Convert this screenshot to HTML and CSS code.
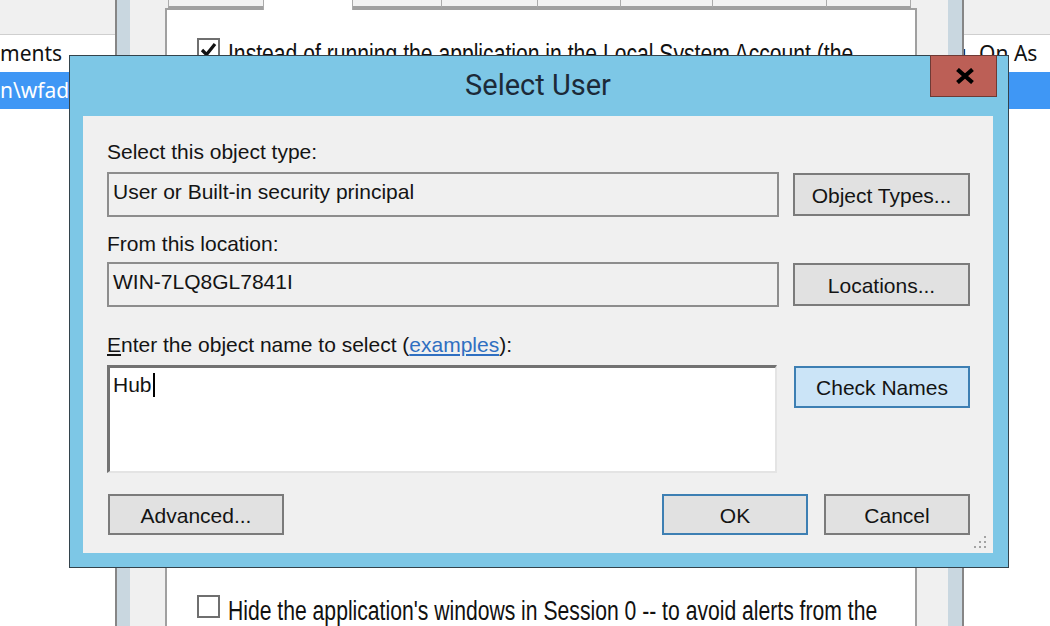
FILE: index.html
```html
<!DOCTYPE html>
<html lang="en">
<head>
<meta charset="utf-8">
<title>Select User</title>
<link rel="stylesheet" href="styles.css">
</head>
<body>
<div class="desk">
  <div class="list list-left">
    <div class="list-head"></div>
    <div class="list-row">ments</div>
    <div class="list-row selected">n\wfadmin</div>
  </div>
  <div class="frame-edge edge-left"></div>
  <div class="sheet">
    <div class="tabs">
      <div class="tab">General</div>
      <div class="tab active">Logon</div>
      <div class="tab">Restart</div>
      <div class="tab">Monitor</div>
      <div class="tab">Startup</div>
      <div class="tab">Automate</div>
      <div class="tab">Dependencies</div>
      <div class="tab">Extras</div>
    </div>
    <div class="page">
      <div class="opt">
        <span class="check on">
          <svg viewBox="0 0 19 19" width="19" height="19"><polyline points="3,10 7.5,14.5 16,4" fill="none" stroke="#111" stroke-width="3.2"/></svg>
        </span>
        <span class="opt-text">Instead of running the application in the Local System Account (the<br>default), run it under a specific user account</span>
      </div>
      <div class="opt opt-hide">
        <span class="check"></span>
        <span class="opt-text">Hide the application's windows in Session 0 -- to avoid alerts from the<br>Interactive Services Detection service.</span>
      </div>
    </div>
  </div>
  <div class="frame-edge edge-right"></div>
  <div class="list list-right">
    <div class="list-head"></div>
    <div class="list-row"><span class="col-shift">Log</span> On As</div>
    <div class="list-row selected"></div>
  </div>
</div>

<div class="dialog">
  <div class="titlebar">Select User</div>
  <div class="close">
    <svg viewBox="0 0 20 16" width="20" height="16"><path d="M2.5 1.5 L17.5 14.5 M17.5 1.5 L2.5 14.5" stroke="#000" stroke-width="4.2" fill="none"/></svg>
  </div>
  <div class="client">
    <div class="lbl">Select this object type:</div>
    <div class="row">
      <div class="field">User or Built-in security principal</div>
      <button class="btn side">Object Types...</button>
    </div>
    <div class="lbl lbl-loc">From this location:</div>
    <div class="row">
      <div class="field">WIN-7LQ8GL7841I</div>
      <button class="btn side">Locations...</button>
    </div>
    <div class="lbl lbl-names"><u>E</u>nter the object name to select (<a class="link">examples</a>):</div>
    <div class="row row-names">
      <div class="names">Hub<span class="caret"></span></div>
      <button class="btn side hot">Check Names</button>
    </div>
    <div class="actions">
      <button class="btn adv">Advanced...</button>
      <button class="btn wide default">OK</button>
      <button class="btn wide">Cancel</button>
    </div>
    <svg class="grip" viewBox="0 0 16 16" width="16" height="16">
      <g fill="#a3a3a3">
        <rect x="12" y="2" width="2" height="2"/>
        <rect x="7" y="7" width="2" height="2"/><rect x="12" y="7" width="2" height="2"/>
        <rect x="2" y="12" width="2" height="2"/><rect x="7" y="12" width="2" height="2"/><rect x="12" y="12" width="2" height="2"/>
      </g>
    </svg>
  </div>
</div>
</body>
</html>
```

FILE: styles.css
```css
* { box-sizing: border-box; }

html, body { margin: 0; padding: 0; }

body {
  width: 1050px;
  height: 626px;
  overflow: hidden;
  position: relative;
  background: #fff;
  font-family: "Liberation Sans", Arial, sans-serif;
  color: #141414;
}

/* ---------- window behind the dialog ---------- */
.desk {
  display: flex;
  height: 626px;
}

.list {
  flex: none;
  background: #fff;
  overflow: hidden;
  font-family: "Noto Sans", "Liberation Sans", sans-serif;
  font-size: 21px;
  color: #111;
}

.list-left { width: 117px; border-right: 2px solid #868686; }
.list-right { width: 88px; border-left: 2px solid #868686; }

.list-head {
  height: 35px;
  background: #f0f0f0;
  border-bottom: 1px solid #cfcfcf;
}

.list-row {
  height: 37px;
  line-height: 37px;
  white-space: nowrap;
}

.list-row.selected { background: #3f97f5; color: #fff; }

.col-shift { margin-left: -34px; margin-right: 7px; }

.frame-edge { flex: none; background: #c9d7e0; }
.edge-left { width: 13px; }
.edge-right { width: 14px; }

.sheet {
  flex: none;
  width: 818px;
  overflow: hidden;
  background: #f0f0f0;
  padding: 0 31px 0 35px;
  display: flex;
  flex-direction: column;
}

.tabs {
  display: flex;
  height: 8px;
  margin-left: 3px;
  align-items: flex-end;
}

.tab {
  height: 30px;
  flex: none;
  background: #f2f2f2;
  border: 1px solid #ababab;
  border-bottom: 2px solid #a0a0a0;
  margin-left: -1px;
  font-size: 19px;
  line-height: 20px;
  text-align: center;
  color: #444;
  overflow: hidden;
}

.tab:nth-child(1) { width: 96px; margin-left: 0; }
.tab:nth-child(2) { width: 90px; }
.tab:nth-child(3) { width: 90px; }
.tab:nth-child(4) { width: 97px; }
.tab:nth-child(5) { width: 84px; }
.tab:nth-child(6) { width: 93px; }
.tab:nth-child(7) { width: 115px; }
.tab:nth-child(8) { width: 85px; }

.tab.active {
  background: #fff;
  border-bottom: none;
  height: 32px;
  margin-bottom: -2px;
  position: relative;
  z-index: 1;
}

.page {
  flex: 1;
  overflow: hidden;
  background: #fff;
  border: 2px solid #a0a0a0;
  border-bottom: none;
  padding: 28px 0 0 30px;
}

.opt {
  display: flex;
  gap: 8px;
  align-items: flex-start;
}

.opt-hide { margin-top: 499px; }

.check {
  width: 23px;
  height: 23px;
  flex: none;
  border: 2px solid #6f6f6f;
  background: #fff;
  display: flex;
  align-items: center;
  justify-content: center;
}

.opt-text {
  display: inline-block;
  white-space: nowrap;
  font-size: 27px;
  line-height: 28px;
  padding-top: 2px;
  color: #111;
  transform: scaleX(0.783);
  transform-origin: left top;
}

/* ---------- Select User dialog ---------- */
.dialog {
  position: absolute;
  left: 69px;
  top: 55px;
  width: 940px;
  height: 513px;
  background: #7dc7e6;
  border: 1px solid #33434c;
  padding: 0 15px 14px 13px;
  display: flex;
  flex-direction: column;
}

.titlebar {
  height: 60px;
  padding-top: 12px;
  line-height: 34px;
  text-align: center;
  font-family: Roboto, "Noto Sans", sans-serif;
  font-size: 29px;
  color: #1c2a38;
}

.close {
  position: absolute;
  top: -1px;
  right: 11px;
  width: 67px;
  height: 42px;
  background: #bc5f56;
  border: 1px solid #6e3a35;
  display: flex;
  align-items: center;
  justify-content: center;
  padding-left: 2px;
}

.client {
  flex: 1;
  position: relative;
  background: #f0f0f0;
  padding: 24px 23px 0 24px;
  font-size: 21px;
}

.lbl {
  line-height: 24px;
  margin-bottom: 8px;
  white-space: nowrap;
}

.lbl-loc { margin-top: 15px; margin-bottom: 6px; }
.lbl-names { margin-top: 26px; }

.link { color: #2f6fc1; text-decoration: underline; }

.row {
  display: flex;
  align-items: center;
  gap: 14px;
}

.field {
  width: 672px;
  height: 45px;
  border: 2px solid #8d8d8d;
  background: #f0f0f0;
  padding: 6px 0 0 4px;
  line-height: 24px;
  white-space: nowrap;
}

.btn {
  font-family: "Liberation Sans", Arial, sans-serif;
  font-size: 21px;
  line-height: 24px;
  color: #141414;
  background: #e1e1e1;
  border: 2px solid #7b7b7b;
  padding: 2px 0 0;
  margin: 0;
  text-align: center;
}

.btn.side { width: 177px; height: 43px; }

.row-names {
  align-items: flex-start;
  gap: 17px;
}

.names {
  width: 670px;
  height: 108px;
  background: #fff;
  border-style: solid;
  border-width: 3px 2px 2px 3px;
  border-color: #727272 #e4e4e4 #e4e4e4 #727272;
  padding: 5px 0 0 3px;
  line-height: 24px;
}

.caret {
  display: inline-block;
  width: 2px;
  height: 24px;
  background: #000;
  vertical-align: -5px;
  margin-left: 1px;
}

.btn.hot {
  width: 176px;
  height: 42px;
  margin-top: 1px;
  background: #cbe4f7;
  border-color: #3d7fb3;
}

.actions {
  display: flex;
  gap: 16px;
  margin-top: 21px;
}

.btn.adv { width: 176px; height: 41px; margin-left: 1px; margin-right: auto; }
.btn.wide { width: 146px; height: 41px; }
.btn.default { border-color: #3d7fb3; }

.grip {
  position: absolute;
  right: 5px;
  bottom: 3px;
}
```
